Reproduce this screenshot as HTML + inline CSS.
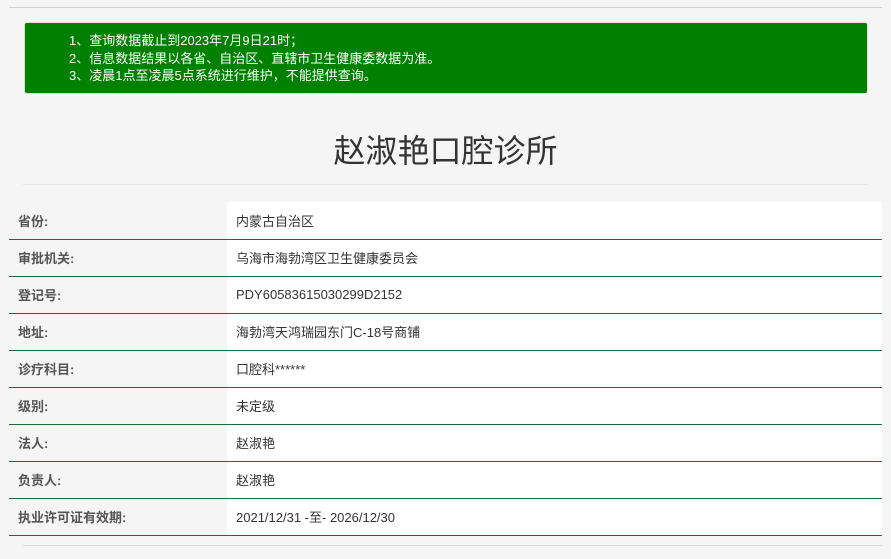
<!DOCTYPE html>
<html><head><meta charset="utf-8"><style>
*{margin:0;padding:0;box-sizing:border-box}
body{width:891px;height:559px;background:#f5f5f5;font-family:"Liberation Sans","Noto Sans CJK SC",sans-serif;position:relative;overflow:hidden}
.tl{position:absolute;left:9px;top:7px;width:873px;height:1px;background:#d0d0d0}
.notice{position:absolute;left:24px;top:22px;width:844px;height:72px;background:#008000;border-radius:3px;border:1px solid #e8d8d8;color:#fff;font-size:13px;line-height:17.5px;padding:9px 0 0 44px}
.notice div{white-space:nowrap}
h1{position:absolute;left:0;width:891px;top:129px;text-align:center;font-weight:normal;font-size:32px;color:#333;line-height:44px}
.hl{position:absolute;left:23px;top:184px;width:845px;height:1px;background:#e6e6e6}
table{position:absolute;left:9px;top:202px;width:873px;border-collapse:collapse;font-size:13px}
td{height:37px;border-bottom:1px solid #1e6a3a;vertical-align:middle}
td.l{width:218px;padding-left:9px;font-weight:bold;color:#555}
td.v{background:#fff;padding-left:9px;color:#333}
.bl{position:absolute;left:23px;top:545px;width:860px;height:1px;background:#ddd}
</style></head><body>
<div class="tl"></div>
<div class="notice">
<div>1、查询数据截止到2023年7月9日21时；</div>
<div>2、信息数据结果以各省、自治区、直辖市卫生健康委数据为准。</div>
<div>3、凌晨1点至凌晨5点系统进行维护，不能提供查询。</div>
</div>
<h1>赵淑艳口腔诊所</h1>
<div class="hl"></div>
<table>
<tr><td class="l">省份:</td><td class="v">内蒙古自治区</td></tr>
<tr><td class="l">审批机关:</td><td class="v">乌海市海勃湾区卫生健康委员会</td></tr>
<tr><td class="l">登记号:</td><td class="v">PDY60583615030299D2152</td></tr>
<tr><td class="l">地址:</td><td class="v">海勃湾天鸿瑞园东门C-18号商铺</td></tr>
<tr><td class="l">诊疗科目:</td><td class="v">口腔科******</td></tr>
<tr><td class="l">级别:</td><td class="v">未定级</td></tr>
<tr><td class="l">法人:</td><td class="v">赵淑艳</td></tr>
<tr><td class="l">负责人:</td><td class="v">赵淑艳</td></tr>
<tr><td class="l">执业许可证有效期:</td><td class="v">2021/12/31 -至- 2026/12/30</td></tr>
</table>
<div class="bl"></div>
</body></html>
